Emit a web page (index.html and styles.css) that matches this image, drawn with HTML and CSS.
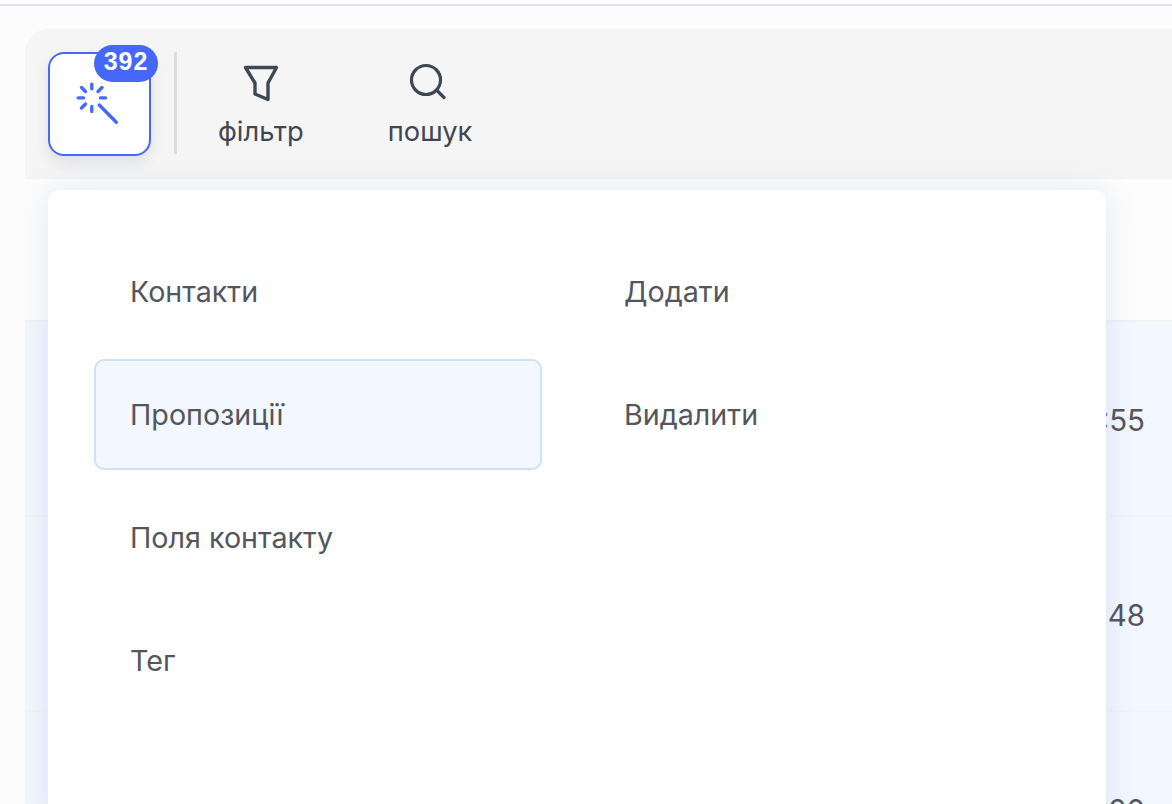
FILE: index.html
```html
<!DOCTYPE html>
<html lang="uk">
<head>
<meta charset="utf-8">
<title>Контакти</title>
<link rel="stylesheet" href="styles.css">
</head>
<body>
<div class="app">
  <div class="content">
    <div class="toolbar">
      <button class="magic">
        <svg class="wand" width="48" height="48" viewBox="0 0 48 48" fill="none" stroke="#4568fb" stroke-width="3.400" stroke-linecap="round">
          <path d="M17.800 4.200V8.800M17.800 26.500V31.500M4.200 17.900H9.500M26.500 17.900H31.500M7.500 7.500L11.500 11.500M28 7.500L24 11.500M7.500 28L11.500 24"/>
          <path d="M25.300 25L42.300 42.300"/>
        </svg>
        <span class="badge">392</span>
      </button>
      <span class="divider"></span>
      <div class="tool tool-filter">
        <svg width="38" height="38" viewBox="0 0 38 38" fill="none" stroke="#3f4754" stroke-width="3.400" stroke-linejoin="round" stroke-linecap="round">
          <path d="M3.500 3.500H34.500L26 19V35.500L13 30V19Z"/>
        </svg>
        <span>фільтр</span>
      </div>
      <div class="tool tool-search">
        <svg width="38" height="38" viewBox="0 0 38 38" fill="none" stroke="#3f4754" stroke-width="3.200" stroke-linecap="round">
          <circle cx="18" cy="18" r="14.500"/>
          <path d="M30 29.500L36 35.500"/>
        </svg>
        <span>пошук</span>
      </div>
    </div>
    <div class="table">
      <div class="thead"></div>
      <div class="row"><span class="time">12:55</span></div>
      <div class="row"><span class="time">12:48</span></div>
      <div class="row"><span class="time">12:20</span></div>
    </div>
    <div class="menu">
      <ul class="col col-left">
        <li class="item">Контакти</li>
        <li class="item active">Пропозиції</li>
        <li class="item">Поля контакту</li>
        <li class="item">Тег</li>
      </ul>
      <ul class="col col-right">
        <li class="item">Додати</li>
        <li class="item">Видалити</li>
      </ul>
    </div>
  </div>
</div>
</body>
</html>
```
FILE: styles.css
```css
* { box-sizing: border-box; }
html, body { margin: 0; height: 100%; overflow: hidden; }
body { background: #fcfcfd; font-family: Inter, "Noto Sans", sans-serif; }
.app { height: 804px; margin-top: 4px; border-top: 2px solid #e3e1ef; padding: 23px 0 0 25px; overflow: hidden; }
.content { position: relative; }
.toolbar { display: flex; align-items: flex-start; height: 150px; padding: 23px 0 0 23px; background: #f5f5f5; border-top-left-radius: 24px; }
.magic { position: relative; flex: none; width: 103px; height: 104px; padding: 0; background: #fff; border: 2px solid #4568fb; border-radius: 16px; box-shadow: 0 6px 14px rgba(60, 70, 120, .12); }
.wand { position: absolute; left: 24px; top: 26px; }
.badge { position: absolute; top: -9px; right: -9px; width: 64px; height: 37px; border-radius: 19px; background: #4568fb; color: #fff; font-size: 25px; font-weight: 700; line-height: 33px; text-align: center; letter-spacing: 1px; }
.divider { flex: none; width: 3px; height: 102px; margin: 0 41px 0 23px; background: #dcdcdc; }
.tool { display: flex; flex-direction: column; align-items: center; gap: 12px; padding-top: 12px; color: #3f4754; font-size: 27.300px; line-height: 36px; }
.tool svg { display: block; }
.tool-search { margin-left: 84px; }
.tool-search svg { margin: -2px 6px 2px 0; }
.table { background: #fdfdfd; }
.thead { height: 143px; border-bottom: 2px solid #f2f2f3; }
.row { display: flex; justify-content: flex-end; align-items: flex-start; height: 195px; padding: 78px 27px 0 0; background: #f3f7ff; border-bottom: 2px solid #f3f2f5; color: #53565c; font-size: 29.500px; line-height: 40px; }
.menu { position: absolute; left: 23px; top: 161px; display: flex; width: 1058px; height: 640px; padding: 46px 0 0 46px; background: #fff; border-radius: 12px; box-shadow: 0 0 32px rgba(70, 90, 160, .14); }
.col { list-style: none; margin: 0; padding: 0; display: flex; flex-direction: column; gap: 12px; }
.col-left { width: 448px; }
.col-right { margin-left: 46px; width: 448px; }
.item { height: 111px; padding-left: 34px; display: flex; align-items: center; color: #53565c; font-size: 28.700px; border: 2px solid transparent; border-radius: 10px; }
.active { background: #f3f7ff; border-color: #cfe0fb; }
```
